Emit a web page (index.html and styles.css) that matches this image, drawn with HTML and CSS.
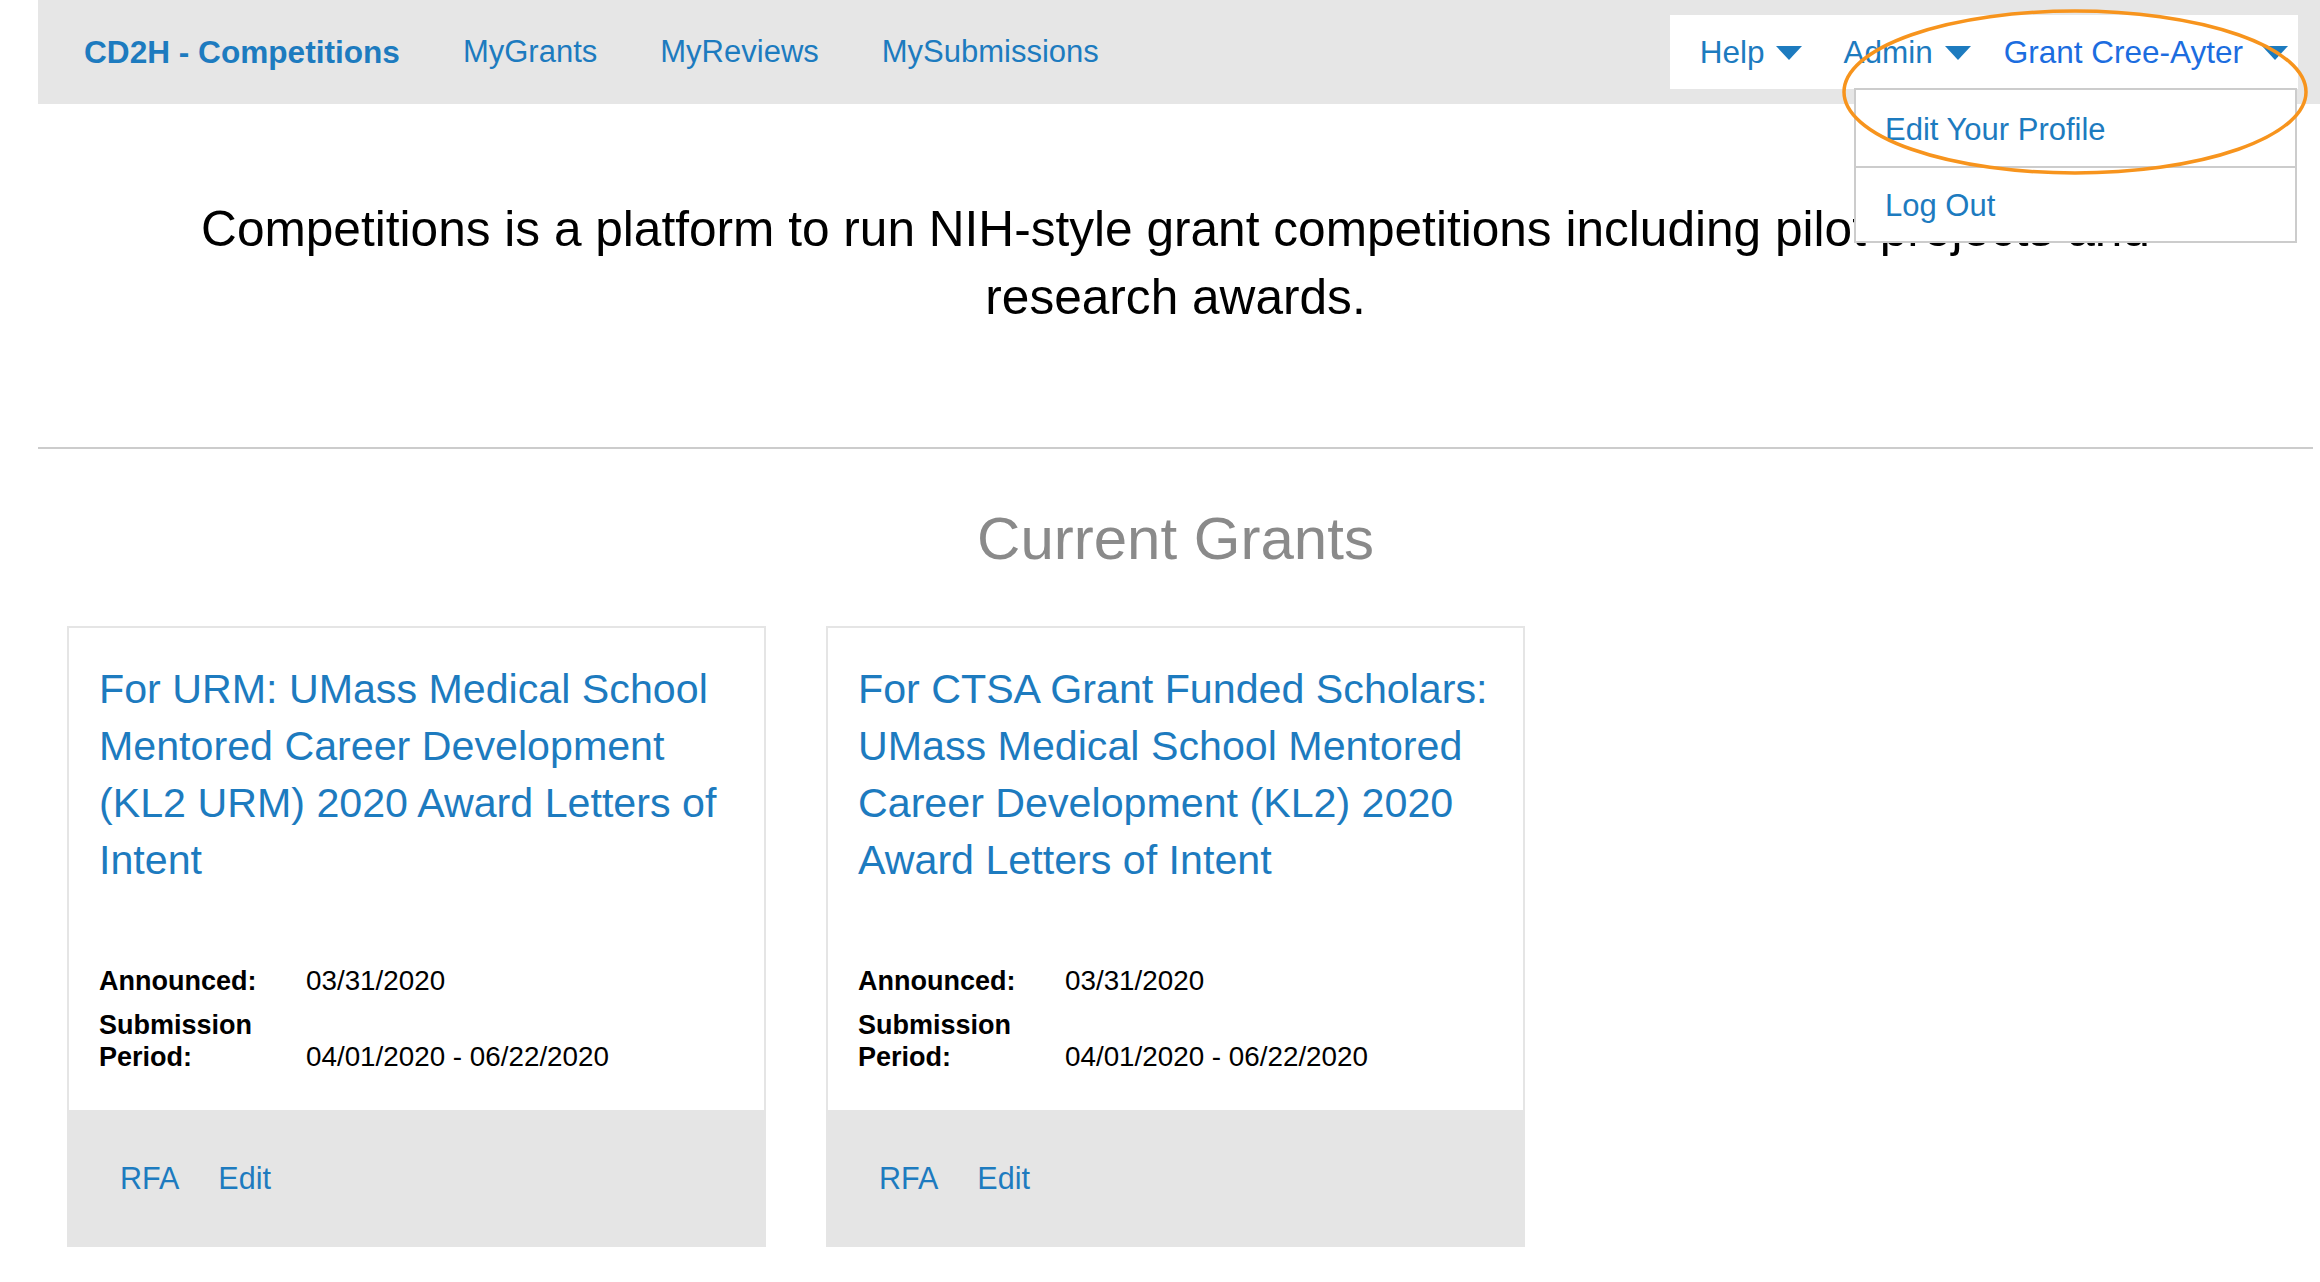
FILE: index.html
```html
<!DOCTYPE html>
<html lang="en">
<head>
<meta charset="utf-8">
<title>CD2H - Competitions</title>
<link rel="stylesheet" href="styles.css">
</head>
<body>
<div class="page">
  <nav class="navbar">
    <a class="brand" href="#">CD2H - Competitions</a>
    <a class="nav-link" href="#">MyGrants</a>
    <a class="nav-link" href="#">MyReviews</a>
    <a class="nav-link" href="#">MySubmissions</a>
    <div class="usermenu">
      <a class="menu-item" href="#"><span>Help</span><svg class="caret" viewBox="0 0 26 14" width="26" height="14"><polygon points="0,0 26,0 13,14"/></svg></a>
      <a class="menu-item admin" href="#"><span>Admin</span><svg class="caret" viewBox="0 0 26 14" width="26" height="14"><polygon points="0,0 26,0 13,14"/></svg></a>
      <a class="menu-item user" href="#"><span class="user-name">Grant Cree-Ayter</span><svg class="caret" viewBox="0 0 26 14" width="26" height="14"><polygon points="0,0 26,0 13,14"/></svg></a>
      <ul class="dropdown">
        <li><a href="#">Edit Your Profile</a></li>
        <li><a href="#">Log Out</a></li>
      </ul>
    </div>
  </nav>

  <main class="main">
    <p class="hero">Competitions is a platform to run NIH-style grant competitions including pilot projects and research awards.</p>
    <hr class="rule">
    <h2 class="section-title">Current Grants</h2>
    <div class="cards">
      <div class="card">
        <div class="card-body">
          <a class="card-title" href="#">For URM: UMass Medical School Mentored Career Development (KL2 URM) 2020 Award Letters of Intent</a>
          <dl class="meta">
            <dt>Announced:</dt><dd>03/31/2020</dd>
            <dt>Submission Period:</dt><dd>04/01/2020 - 06/22/2020</dd>
          </dl>
        </div>
        <div class="card-foot">
          <a href="#">RFA</a>
          <a href="#">Edit</a>
        </div>
      </div>
      <div class="card">
        <div class="card-body">
          <a class="card-title" href="#">For CTSA Grant Funded Scholars: UMass Medical School Mentored Career Development (KL2) 2020 Award Letters of Intent</a>
          <dl class="meta">
            <dt>Announced:</dt><dd>03/31/2020</dd>
            <dt>Submission Period:</dt><dd>04/01/2020 - 06/22/2020</dd>
          </dl>
        </div>
        <div class="card-foot">
          <a href="#">RFA</a>
          <a href="#">Edit</a>
        </div>
      </div>
    </div>
  </main>
</div>

<svg class="annotation" width="2320" height="200" viewBox="0 0 2320 200">
  <ellipse cx="2075" cy="92" rx="231" ry="81"/>
</svg>
</body>
</html>
```

FILE: styles.css
```css
* { box-sizing: border-box; }

html, body {
  margin: 0;
  padding: 0;
  background: #fff;
}

body {
  font-family: "Liberation Sans", Arial, Helvetica, sans-serif;
  color: #000;
  position: relative;
  width: 2320px;
  height: 1282px;
  overflow: hidden;
}

a { text-decoration: none; color: #1d7bbf; }

.page {
  padding-left: 38px;
}

/* NAVBAR */
.navbar {
  height: 104px;
  background: #e6e6e6;
  display: flex;
  align-items: center;
  position: relative;
  z-index: 5;
}

.brand {
  font-size: 31.6px;
  font-weight: bold;
  margin-left: 46px;
  margin-right: 63px;
  color: #1d7bbf;
}

.nav-link {
  font-size: 31px;
  margin-right: 63px;
}

.usermenu {
  margin-left: auto;
  margin-right: 22px;
  height: 74px;
  background: #fff;
  display: flex;
  align-items: center;
  padding: 0 10px 0 30px;
  position: relative;
}

.menu-item {
  font-size: 31.5px;
  display: flex;
  align-items: center;
  gap: 12px;
}

.menu-item.admin { margin-left: 41px; }
.menu-item.user { margin-left: 33px; gap: 19px; font-size: 31.5px; }
.user-name { color: #1c6ddf; }

.caret {
  fill: #1d7bbf;
  display: block;
  margin-top: 1px;
}

.dropdown {
  position: absolute;
  top: 73px;
  right: 1px;
  width: 443px;
  margin: 0;
  padding: 0;
  list-style: none;
  background: #fff;
  border: 2px solid #cccccc;
}

.dropdown li {
  height: 76px;
  display: flex;
  align-items: center;
  padding-left: 29px;
  padding-top: 4px;
}

.dropdown li + li {
  border-top: 2px solid #cccccc;
  height: 75px;
  padding-top: 2px;
}

.dropdown a { font-size: 31px; }

/* MAIN */
.main {
  margin-right: 7px;
}

.hero {
  margin: 91px 0 0;
  padding: 0 120px;
  text-align: center;
  font-size: 49.6px;
  line-height: 68px;
  color: #000;
}

.rule {
  margin: 116px 0 0;
  border: 0;
  height: 2px;
  background: #cccccc;
}

.section-title {
  margin: 54px 0 0;
  text-align: center;
  font-size: 60px;
  line-height: 72px;
  font-weight: normal;
  color: #8a8a8a;
}

.cards {
  margin-top: 51px;
  padding-left: 29px;
  display: flex;
  gap: 60px;
}

.card {
  width: 699px;
  display: flex;
  flex-direction: column;
}

.card-body {
  border: 2px solid #e5e5e5;
  border-bottom: 0;
  padding: 33px 20px 37px 30px;
}

.card-title {
  display: block;
  font-size: 41.2px;
  line-height: 57px;
  margin-bottom: 76px;
}

.meta {
  margin: 0;
  display: grid;
  grid-template-columns: 207px auto;
  row-gap: 12px;
  align-items: end;
  font-size: 27px;
  line-height: 32px;
}

.meta dt {
  font-weight: bold;
  padding-right: 40px;
}

.meta dd { margin: 0; font-size: 27.8px; }

.card-foot {
  height: 137px;
  background: #e5e5e5;
  display: flex;
  align-items: center;
  padding-left: 53px;
  gap: 39px;
}

.card-foot a { font-size: 30.5px; }

/* annotation overlay */
.annotation {
  position: absolute;
  left: 0;
  top: 0;
  z-index: 10;
  pointer-events: none;
}

.annotation ellipse {
  fill: none;
  stroke: #f7941d;
  stroke-width: 3.5;
}
```
